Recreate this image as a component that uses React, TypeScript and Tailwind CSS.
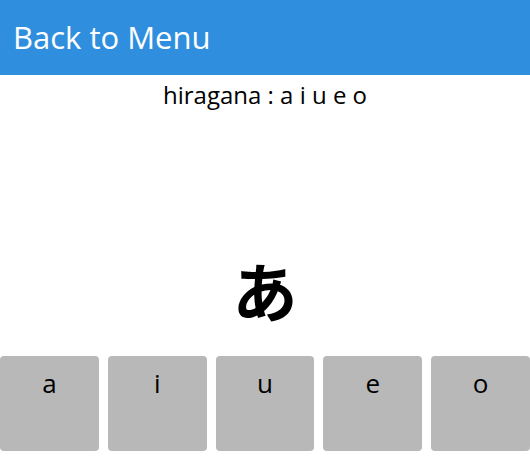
const KEYS = ["a", "i", "u", "e", "o"];

export default function App() {
  return (
    <div className="flex flex-col h-[466px] w-[530px] bg-white font-['Open_Sans','Noto_Sans_CJK_JP',sans-serif] text-black">
      <header className="h-[75px] bg-[#2f8fde] flex items-center px-[13px]">
        <h1 className="text-[31px] text-white leading-none">Back to Menu</h1>
      </header>
      <p className="text-center text-[24px] leading-[30px] mt-[5px]">
        hiragana : a i u e o
      </p>
      <div className="flex-1 flex items-end justify-center pb-[34px]">
        <span className="text-[65px] font-bold leading-none font-['Noto_Sans_CJK_JP',sans-serif]">
          あ
        </span>
      </div>
      <div className="flex gap-[9px] mb-[15px]">
        {KEYS.map((k) => (
          <button
            key={k}
            className="flex-1 h-[95px] rounded-[4px] bg-[#b8b8b8] flex justify-center pt-[9px] text-[26px] leading-[36px]"
          >
            {k}
          </button>
        ))}
      </div>
    </div>
  );
}
